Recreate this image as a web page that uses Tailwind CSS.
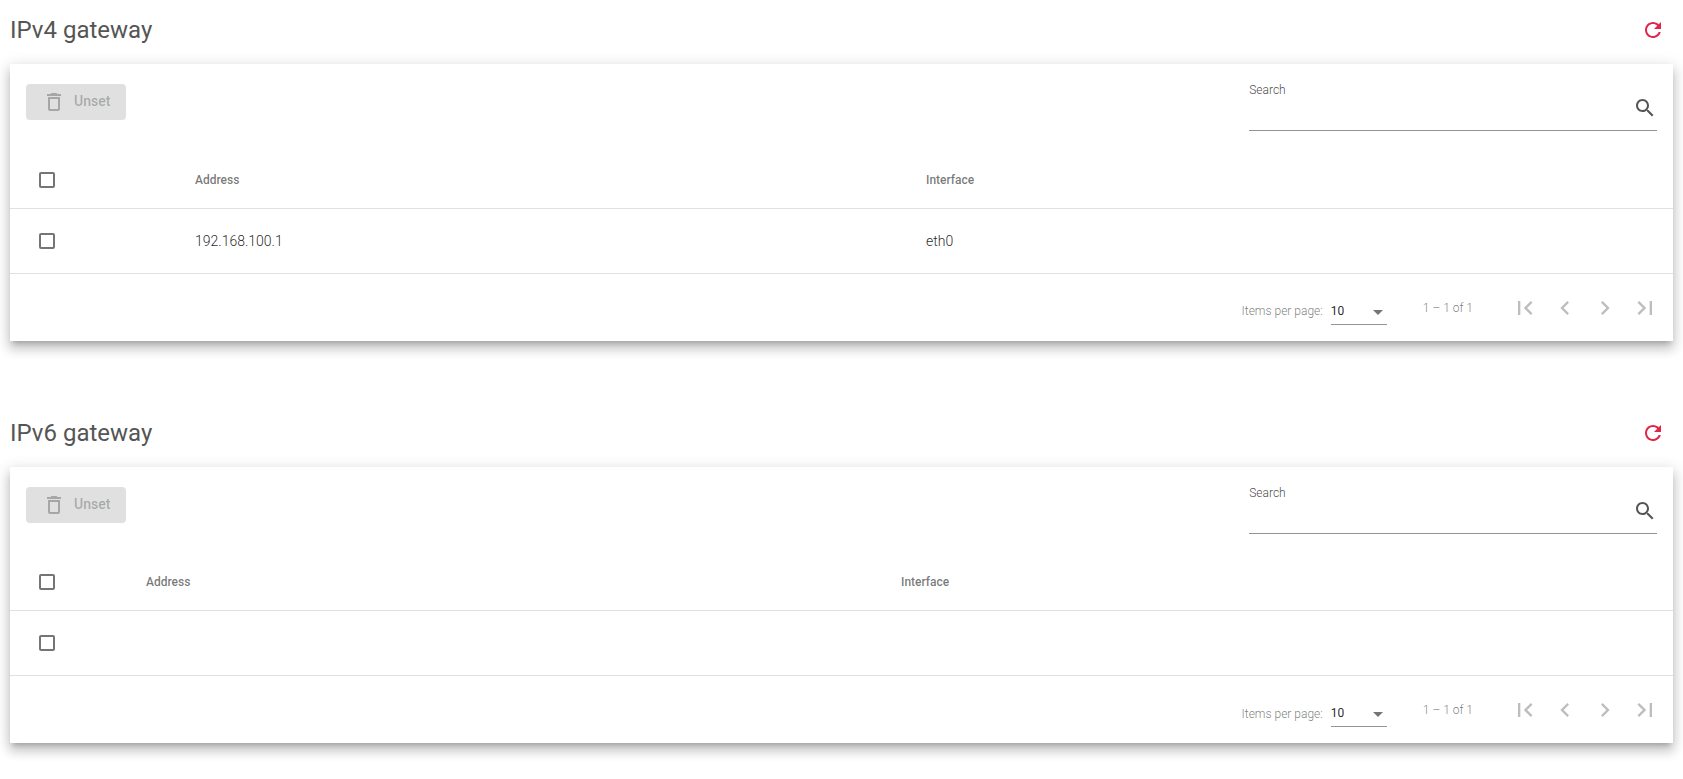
<!DOCTYPE html>
<html lang="en">
<head>
  <meta charset="UTF-8">
  <meta name="viewport" content="width=device-width, initial-scale=1.0">
  <title>Gateway</title>
  <script src="https://cdn.jsdelivr.net/npm/@tailwindcss/browser@4"></script>
</head>
<body class="bg-white font-[Roboto,sans-serif] text-black/87">
<!-- shared icons -->
<svg class="hidden">
  <symbol id="refresh" viewBox="0 0 24 24"><path d="M17.65 6.35C16.2 4.9 14.21 4 12 4c-4.42 0-7.99 3.58-7.99 8s3.57 8 7.99 8c3.73 0 6.84-2.55 7.73-6h-2.08c-.82 2.33-3.04 4-5.65 4-3.31 0-6-2.69-6-6s2.69-6 6-6c1.66 0 3.14.69 4.22 1.78L13 11h7V4l-2.35 2.35z"/></symbol>
  <symbol id="trash" viewBox="0 0 24 24"><path d="M6 19c0 1.100.9 2 2 2h8c1.100 0 2-.9 2-2V7H6v12zM8 9h8v10H8V9zm7.500-5l-1-1h-5l-1 1H5v2h14V4z"/></symbol>
  <symbol id="search" viewBox="0 0 24 24"><path d="M15.500 14h-.79l-.28-.27C15.410 12.590 16 11.110 16 9.500 16 5.910 13.090 3 9.500 3S3 5.910 3 9.500 5.910 16 9.500 16c1.610 0 3.090-.59 4.230-1.570l.27.28v.79l5 4.990L20.490 19l-4.990-5zm-6 0C7.010 14 5 11.990 5 9.500S7.010 5 9.500 5 14 7.010 14 9.500 11.990 14 9.500 14z"/></symbol>
  <symbol id="first" viewBox="0 0 24 24"><path d="M18.410 16.590L13.820 12l4.590-4.590L17 6l-6 6 6 6zM6 6h2v12H6z"/></symbol>
  <symbol id="prev" viewBox="0 0 24 24"><path d="M15.410 7.410L14 6l-6 6 6 6 1.410-1.410L10.830 12z"/></symbol>
  <symbol id="next" viewBox="0 0 24 24"><path d="M10 6L8.590 7.410 13.170 12l-4.580 4.590L10 18l6-6z"/></symbol>
  <symbol id="last" viewBox="0 0 24 24"><path d="M5.590 7.410L10.180 12l-4.590 4.590L7 18l6-6-6-6zM16 6h2v12h-2z"/></symbol>
</svg>

<main class="px-[10px] pb-8">
  <section class="mb-[62px]">
    <header class="flex items-center justify-between h-[60px] mb-1 pr-2">
      <h2 class="text-2xl text-[#555]">IPv4 gateway</h2>
      <button aria-label="Refresh" class="text-[#e4254a]"><svg class="size-6 fill-current"><use href="#refresh"/></svg></button>
    </header>
    <div class="bg-white shadow-[0_5px_5px_-3px_rgba(0,0,0,0.2),0_8px_10px_1px_rgba(0,0,0,0.14),0_3px_14px_2px_rgba(0,0,0,0.12)]">
      <div class="flex items-start justify-between h-[88px] px-4 pt-5">
        <button disabled class="flex items-center gap-2 h-9 px-4 rounded bg-[#e0e0e0] text-black/26 text-sm font-medium">
          <svg class="size-6 fill-current"><use href="#trash"/></svg>
          <span class="pb-0.5">Unset</span>
        </button>
        <div class="w-1/4 h-[47px] border-b border-black/42">
          <label for="search4" class="block text-xs leading-3 font-light text-black/75">Search</label>
          <div class="flex items-center">
            <input id="search4" type="text" class="flex-1 min-w-0 h-5 text-sm outline-none">
            <svg class="size-6 fill-[#555]"><use href="#search"/></svg>
          </div>
        </div>
      </div>
      <table class="w-full table-fixed text-left">
        <thead>
          <tr class="h-14 border-b border-black/12 text-xs text-black/54">
            <th class="w-[185px] pl-[29px]"><input type="checkbox" aria-label="Select all" class="block appearance-none size-4 border-2 border-black/54 rounded-xs"></th>
            <th class="w-[731px] font-medium">Address</th>
            <th class="font-medium">Interface</th>
          </tr>
        </thead>
        <tbody>
          <tr class="h-[65px] border-b border-black/12 text-sm font-light">
            <td class="pl-[29px]"><input type="checkbox" aria-label="Select 192.168.100.1" class="block appearance-none size-4 border-2 border-black/54 rounded-xs"></td>
            <td>192.168.100.1</td>
            <td>eth0</td>
          </tr>
        </tbody>
      </table>
      <div class="flex items-start justify-end pt-[14px] pb-[13px] pr-2 text-xs font-light text-black/54">
        <div class="flex items-center mt-[10px] mr-9">
          <label for="size4" class="mr-2">Items per page:</label>
          <div class="relative w-14">
            <select id="size4" class="block appearance-none w-full h-[27px] border-b border-black/42 text-xs font-normal text-black/87">
              <option>10</option>
            </select>
            <svg class="absolute right-1 top-3 w-[10px] h-[5px] fill-black/54 pointer-events-none" viewBox="0 0 10 5"><path d="M0 0h10L5 5z"/></svg>
          </div>
        </div>
        <div class="leading-10 mr-8">1 – 1 of 1</div>
        <div class="flex text-black/26">
          <button disabled aria-label="First page" class="p-[6px]"><svg class="size-7 fill-current"><use href="#first"/></svg></button>
          <button disabled aria-label="Previous page" class="p-[6px]"><svg class="size-7 fill-current"><use href="#prev"/></svg></button>
          <button disabled aria-label="Next page" class="p-[6px]"><svg class="size-7 fill-current"><use href="#next"/></svg></button>
          <button disabled aria-label="Last page" class="p-[6px]"><svg class="size-7 fill-current"><use href="#last"/></svg></button>
        </div>
      </div>
    </div>
  </section>

  <section>
    <header class="flex items-center justify-between h-[60px] mb-1 pr-2">
      <h2 class="text-2xl text-[#555]">IPv6 gateway</h2>
      <button aria-label="Refresh" class="text-[#e4254a]"><svg class="size-6 fill-current"><use href="#refresh"/></svg></button>
    </header>
    <div class="bg-white shadow-[0_5px_5px_-3px_rgba(0,0,0,0.2),0_8px_10px_1px_rgba(0,0,0,0.14),0_3px_14px_2px_rgba(0,0,0,0.12)]">
      <div class="flex items-start justify-between h-[88px] px-4 pt-5">
        <button disabled class="flex items-center gap-2 h-9 px-4 rounded bg-[#e0e0e0] text-black/26 text-sm font-medium">
          <svg class="size-6 fill-current"><use href="#trash"/></svg>
          <span class="pb-0.5">Unset</span>
        </button>
        <div class="w-1/4 h-[47px] border-b border-black/42">
          <label for="search6" class="block text-xs leading-3 font-light text-black/75">Search</label>
          <div class="flex items-center">
            <input id="search6" type="text" class="flex-1 min-w-0 h-5 text-sm outline-none">
            <svg class="size-6 fill-[#555]"><use href="#search"/></svg>
          </div>
        </div>
      </div>
      <table class="w-full table-fixed text-left">
        <thead>
          <tr class="h-14 border-b border-black/12 text-xs text-black/54">
            <th class="w-[136px] pl-[29px]"><input type="checkbox" aria-label="Select all" class="block appearance-none size-4 border-2 border-black/54 rounded-xs"></th>
            <th class="w-[755px] font-medium">Address</th>
            <th class="font-medium">Interface</th>
          </tr>
        </thead>
        <tbody>
          <tr class="h-[65px] border-b border-black/12 text-sm font-light">
            <td class="pl-[29px]"><input type="checkbox" aria-label="Select row" class="block appearance-none size-4 border-2 border-black/54 rounded-xs"></td>
            <td></td>
            <td></td>
          </tr>
        </tbody>
      </table>
      <div class="flex items-start justify-end pt-[14px] pb-[13px] pr-2 text-xs font-light text-black/54">
        <div class="flex items-center mt-[10px] mr-9">
          <label for="size6" class="mr-2">Items per page:</label>
          <div class="relative w-14">
            <select id="size6" class="block appearance-none w-full h-[27px] border-b border-black/42 text-xs font-normal text-black/87">
              <option>10</option>
            </select>
            <svg class="absolute right-1 top-3 w-[10px] h-[5px] fill-black/54 pointer-events-none" viewBox="0 0 10 5"><path d="M0 0h10L5 5z"/></svg>
          </div>
        </div>
        <div class="leading-10 mr-8">1 – 1 of 1</div>
        <div class="flex text-black/26">
          <button disabled aria-label="First page" class="p-[6px]"><svg class="size-7 fill-current"><use href="#first"/></svg></button>
          <button disabled aria-label="Previous page" class="p-[6px]"><svg class="size-7 fill-current"><use href="#prev"/></svg></button>
          <button disabled aria-label="Next page" class="p-[6px]"><svg class="size-7 fill-current"><use href="#next"/></svg></button>
          <button disabled aria-label="Last page" class="p-[6px]"><svg class="size-7 fill-current"><use href="#last"/></svg></button>
        </div>
      </div>
    </div>
  </section>
</main>
</body>
</html>
